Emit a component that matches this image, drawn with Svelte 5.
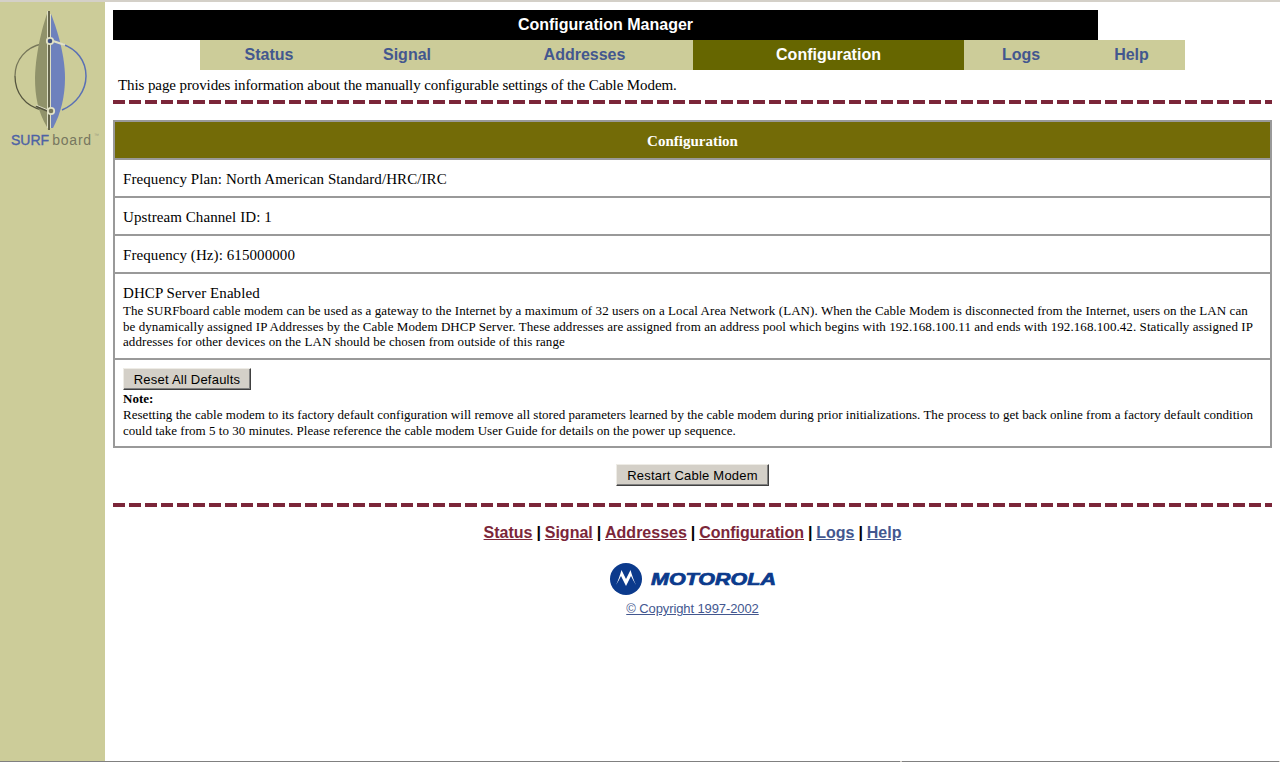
<script>
  const tabs = [
    { label: 'Status', w: 138 },
    { label: 'Signal', w: 138 },
    { label: 'Addresses', w: 217 },
    { label: 'Configuration', w: 271, active: true },
    { label: 'Logs', w: 114 },
    { label: 'Help', w: 107 }
  ];
  const foot = [
    { label: 'Status', c: 'visited' },
    { label: 'Signal', c: 'visited' },
    { label: 'Addresses', c: 'visited' },
    { label: 'Configuration', c: 'visited' },
    { label: 'Logs', c: 'fresh' },
    { label: 'Help', c: 'fresh' }
  ];
</script>

<div class="page">
  <div class="cols">
    <aside class="side">
      <svg class="surf" width="105" height="150" viewBox="0 2 105 150" role="img" aria-label="SURFboard">
        <path d="M15 76 C15 60 26 47 42 44" fill="none" stroke="#77775a" stroke-width="1.3"/>
        <path d="M15 76 C15 93 25 106 42 110" fill="none" stroke="#55553f" stroke-width="1.3"/>
        <path d="M62 44 C77 49 86 61 86 76" fill="none" stroke="#5a70b4" stroke-width="1.5"/>
        <path d="M86 76 C86 91 76 104 62 110" fill="none" stroke="#5a70b4" stroke-width="1.5"/>
        <path d="M48 11 C44 22 36 48 35 78 C35 96 38 112 47 127 L47 128 L48 11 Z" fill="#90926a"/>
        <path d="M51 14 C55 24 65 52 65 78 C65 96 61 113 53 128 L51 128 Z" fill="#6e81bd"/>
        <path d="M47.5 11 V128" stroke="#dedfc4" stroke-width="1"/>
        <path d="M49 11 V130" stroke="#4b4b38" stroke-width="1.6"/>
        <path d="M50.5 14 V128" stroke="#dedfc4" stroke-width="1"/>
        <path d="M53 41 L65 45" stroke="#e0e0c6" stroke-width="2.2"/>
        <path d="M36 106 L48 111" stroke="#55553f" stroke-width="2.4"/>
        <path d="M36 105 L48 110" stroke="#e0e0c6" stroke-width="1"/>
        <circle cx="50" cy="41" r="3.2" fill="#41517f" stroke="#e2e2c6" stroke-width="1.8"/>
        <circle cx="51" cy="111" r="3.2" fill="#77775a" stroke="#e2e2c6" stroke-width="1.8"/>
        <text x="11" y="145" class="surf-text"><tspan class="sf" fill="#4d62a5">SURF</tspan><tspan dx="3" class="bd" fill="#77775f">board</tspan><tspan class="tm" dx="2" dy="-8" fill="#9a9a80">™</tspan></text>
      </svg>
    </aside>

    <main class="main">
      <div class="title">Configuration Manager</div>
      <nav class="tabs">
        {#each tabs as t}
          <a class="tab" class:active={t.active} style="width:{t.w}px" href="#top">{t.label}</a>
        {/each}
      </nav>
      <p class="intro">This page provides information about the manually configurable settings of the Cable Modem.</p>
      <div class="dash"></div>

      <section class="panel">
        <h2 class="head">Configuration</h2>
        <div class="row">Frequency Plan: North American Standard/HRC/IRC</div>
        <div class="row">Upstream Channel ID: 1</div>
        <div class="row">Frequency (Hz): 615000000</div>
        <div class="row dhcp">
          <div class="lead">DHCP Server Enabled</div>
          <div class="small desc">The SURFboard cable modem can be used as a gateway to the Internet by a maximum of 32 users on a Local Area Network (LAN). When the Cable Modem is disconnected from the Internet, users on the LAN can be dynamically assigned IP Addresses by the Cable Modem DHCP Server. These addresses are assigned from an address pool which begins with 192.168.100.11 and ends with 192.168.100.42. Statically assigned IP addresses for other devices on the LAN should be chosen from outside of this range</div>
        </div>
        <div class="row last">
          <button class="btn reset" type="button">Reset All Defaults</button>
          <div class="small note"><b>Note:</b></div>
          <div class="small note">Resetting the cable modem to its factory default configuration will remove all stored parameters learned by the cable modem during prior initializations. The process to get back online from a factory default condition could take from 5 to 30 minutes. Please reference the cable modem User Guide for details on the power up sequence.</div>
        </div>
      </section>

      <div class="restart"><button class="btn wide" type="button">Restart Cable Modem</button></div>
      <div class="dash second"></div>

      <div class="links">
        {#each foot as f, i}
          {#if i > 0}<span class="sep">|</span>{/if}<a class={f.c} href="#top">{f.label}</a>
        {/each}
      </div>

      <div class="moto">
        <svg width="166" height="33" viewBox="0 0 166 33" role="img" aria-label="Motorola">
          <circle cx="16" cy="16" r="16" fill="#0b3a8c"/>
          <path d="M6 22 C8 18 10 12 11.5 7 L16 16 L20.5 7 C22 12 24 18 26 22 C24 19 22.5 16 21 13 L16 23 L11 13 C9.5 16 8 19 6 22 Z" fill="#fff"/>
          <text x="41" y="21.5" class="moto-text" textLength="125" lengthAdjust="spacingAndGlyphs">MOTOROLA</text>
        </svg>
        <a class="copy" href="#top">© Copyright 1997-2002</a>
      </div>
    </main>
  </div>
  <div class="edge"></div>
</div>

<style>
  :global(body) {
    margin: 0;
    background: #fff;
  }
  .page {
    display: flex;
    flex-direction: column;
    height: 762px;
    overflow: hidden;
    border-top: 2px solid #d4d0c8;
    box-sizing: border-box;
    font-family: "Liberation Serif", "Times New Roman", serif;
    color: #000;
  }
  .cols {
    display: flex;
    flex: 1;
    min-height: 0;
  }
  .edge {
    height: 1px;
    background: linear-gradient(90deg, #808080 0 900px, #d4d0c8 900px 902px, #808080 902px 1279px, #d4d0c8 1279px);
  }
  .side {
    flex: 0 0 105px;
    background: #cccc99;
  }
  .surf {
    display: block;
  }
  .surf-text {
    font: 14px "Liberation Sans", Arial, sans-serif;
  }
  .sf {
    stroke: #4d62a5;
    stroke-width: 0.35px;
  }
  .bd {
    letter-spacing: 0.8px;
  }
  .tm {
    font-size: 5px;
  }
  .main {
    width: 1159px;
    margin-left: 8px;
    padding-top: 8px;
  }
  .title {
    width: 985px;
    height: 30px;
    background: #000;
    color: #fff;
    font: bold 16px/30px "Liberation Sans", Arial, sans-serif;
    text-align: center;
  }
  .tabs {
    display: flex;
    margin-left: 87px;
    height: 30px;
    background: #cccc99;
    width: 985px;
  }
  .tab {
    background: #cccc99;
    color: #43578f;
    font: bold 16px/30px "Liberation Sans", Arial, sans-serif;
    text-align: center;
    text-decoration: none;
  }
  .tab.active {
    background: #666600;
    color: #fff;
  }
  .intro {
    margin: 0;
    height: 30px;
    padding-left: 5px;
    font-size: 15px;
    line-height: 30px;
    letter-spacing: -0.1px;
  }
  .dash {
    height: 4px;
    background: repeating-linear-gradient(90deg, #7b2639 0 12px, transparent 12px 16px);
  }
  .panel {
    margin-top: 16px;
    border: 2px solid #999;
  }
  .head {
    margin: 0;
    height: 36px;
    background: #736b07;
    color: #fff;
    font: bold 15px/38px "Liberation Serif", serif;
    text-align: center;
  }
  .row {
    border-top: 2px solid #999;
    height: 36px;
    padding: 0 8px;
    font-size: 15px;
    line-height: 38px;
    letter-spacing: 0.08px;
  }
  .row.dhcp {
    height: auto;
    padding: 10px 8px 8.5px;
    line-height: 18px;
  }
  .lead {
    margin-bottom: 1px;
  }
  .row.last {
    height: auto;
    padding: 8px 8px 7px;
    line-height: 16px;
  }
  .small {
    font-size: 13px;
    line-height: 15.5px;
    letter-spacing: 0.07px;
  }
  .desc {
    max-width: 1132px;
  }
  .small.note {
    line-height: 16px;
    letter-spacing: 0.03px;
  }
  .btn {
    display: block;
    margin: 0 0 1px;
    padding: 0;
    height: 22px;
    background: #d4d0c8;
    border: 1px solid;
    border-color: #eeece6 #404040 #404040 #eeece6;
    box-shadow: inset -1px -1px 0 #808080;
    font: 13px "Liberation Sans", Arial, sans-serif;
    letter-spacing: 0.22px;
    color: #000;
  }
  .reset {
    width: 128px;
  }
  .wide {
    width: 153px;
  }
  .restart {
    display: flex;
    justify-content: center;
    margin-top: 16px;
  }
  .dash.second {
    margin-top: 16px;
  }
  .links {
    margin-top: 13px;
    text-align: center;
    font: bold 16px/26px "Liberation Sans", Arial, sans-serif;
  }
  .sep {
    margin: 0 3.9px;
  }
  .visited {
    color: #7b2639;
  }
  .fresh {
    color: #43578f;
  }
  .moto {
    display: flex;
    flex-direction: column;
    align-items: center;
    margin-top: 17px;
  }
  .moto svg {
    display: block;
  }
  .moto-text {
    font: italic 900 16.5px "Liberation Sans", Arial, sans-serif;
    fill: #0b3a8c;
    stroke: #0b3a8c;
    stroke-width: 0.7px;
  }
  .copy {
    margin-top: 5px;
    color: #43578f;
    font: 13px/16px "Liberation Sans", Arial, sans-serif;
    letter-spacing: -0.1px;
  }
</style>
